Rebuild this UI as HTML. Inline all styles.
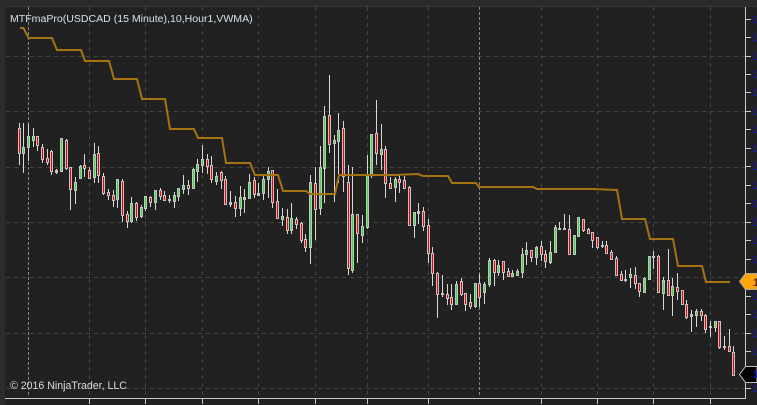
<!DOCTYPE html>
<html><head><meta charset="utf-8"><style>
html,body{margin:0;padding:0;background:#212121;width:757px;height:405px;overflow:hidden}
svg{display:block}
text{font-family:"Liberation Sans",Arial,sans-serif}
</style></head><body>
<svg width="757" height="405" viewBox="0 0 757 405" xmlns="http://www.w3.org/2000/svg">
<rect width="757" height="405" fill="#212121"/>
<rect width="757" height="6" fill="#2b2b2d"/>
<rect y="6" width="757" height="1" fill="#39393b"/>
<rect width="5" height="405" fill="#2c2c2e"/>
<g fill="none" stroke="#444" stroke-width="1" stroke-dasharray="4 4">
<path d="M6 56.5H745M6 111.5H745M6 167.5H745M6 222.5H745M6 277.5H745M6 333.5H745M6 388.5H745"/>
<path d="M89.5 7V398M145.5 7V398M202.5 7V398M258.5 7V398M315.5 7V398M367.5 7V398M428.5 7V398M541.5 7V398M597.5 7V398M653.5 7V398M710.5 7V398"/>
</g>
<path d="M28.5 7V396M479.5 7V396" fill="none" stroke="#888" stroke-dasharray="3 2"/>
<!-- wicks -->
<path fill="none" stroke="#d8d8d8" stroke-width="1" d="M19.5 123V165M23.5 123V173M28.5 124V161M33.5 128V147M37.5 136V151M42.5 144V163M47.5 149V165M51.5 150V175M56.5 169V174M61.5 138V172M66.5 139V170M70.5 167V210M75.5 177V204M80.5 165V179M84.5 154V177M89.5 167V178M94.5 143V183M98.5 146V183M103.5 173V195M108.5 189V200M113.5 190V207M117.5 179V208M122.5 179V222M127.5 211V228M131.5 197V223M136.5 202V221M141.5 205V218M145.5 196V211M150.5 196V207M155.5 190V210M160.5 188V200M164.5 191V201M169.5 195V203M174.5 192V208M178.5 188V201M183.5 175V194M188.5 180V195M193.5 168V189M197.5 159V182M202.5 145V173M207.5 154V174M211.5 156V183M216.5 172V185M221.5 171V189M225.5 176V205M230.5 191V207M235.5 196V217M240.5 186V216M244.5 189V213M249.5 174V198M254.5 177V198M258.5 183V196M263.5 175V200M268.5 167V198M272.5 170V208M277.5 189V218M282.5 208V226M287.5 209V234M291.5 203V234M296.5 217V229M301.5 222V243M305.5 234V252M310.5 175V264M315.5 167V240M320.5 146V215M324.5 106V203M329.5 75V153M334.5 135V202M338.5 113V183M343.5 121V192M348.5 165V275M352.5 167V273M357.5 214V263M362.5 215V243M367.5 155V229M371.5 134V178M376.5 100V165M381.5 124V170M385.5 146V198M390.5 177V189M395.5 177V202M399.5 175V193M404.5 176V189M409.5 186V226M414.5 212V238M418.5 203V224M423.5 207V231M428.5 219V263M432.5 247V286M437.5 272V318M442.5 275V297M447.5 284V305M451.5 284V310M456.5 281V305M461.5 278V296M465.5 293V311M470.5 294V309M475.5 283V308M479.5 274V307M484.5 282V304M489.5 258V287M494.5 259V286M498.5 260V276M503.5 261V280M508.5 268V277M512.5 270V277M517.5 269V276M522.5 248V278M526.5 242V265M531.5 250V262M536.5 246V265M541.5 241V261M545.5 250V268M550.5 241V264M555.5 225V252M559.5 222V230M564.5 214V230M569.5 215V255M574.5 235V255M578.5 217V237M583.5 219V232M588.5 228V234M592.5 232V248M597.5 237V249M602.5 241V248M606.5 241V254M611.5 250V260M616.5 256V275M621.5 271V281M625.5 270V282M630.5 268V288M635.5 267V289M639.5 283V297M644.5 277V293M649.5 256V279M653.5 251V269M658.5 255V293M663.5 277V310M668.5 249V295M672.5 278V316M677.5 273V300M682.5 290V305M686.5 300V319M691.5 310V332M696.5 309V327M701.5 309V321M705.5 314V333M710.5 321V337M715.5 321V332M719.5 321V349M724.5 336V350M729.5 329V352M733.5 346V375"/>
<!-- bodies -->
<path fill="none" stroke="#c4c4c4" stroke-width="3" d="M19.5 128V154M23.5 147V154M28.5 136V148M33.5 136V141M37.5 136V146M42.5 147V160M47.5 158V163M51.5 151V172M56.5 170V173M61.5 138V172M66.5 140V169M70.5 167V190M75.5 182V191M80.5 166V179M84.5 165V169M89.5 170V179M94.5 154V178M98.5 153V176M103.5 176V194M108.5 192V196M113.5 195V201M117.5 179V200M122.5 181V216M127.5 214V222M131.5 203V222M136.5 203V218M141.5 207V217M145.5 196V209M150.5 197V203M155.5 190V203M160.5 190V197M164.5 195V201M169.5 199V201M174.5 195V202M178.5 188V197M183.5 185V190M188.5 185V189M193.5 169V189M197.5 164V172M202.5 159V166M207.5 159V167M211.5 165V180M216.5 176V182M221.5 172V181M225.5 179V205M230.5 202V205M235.5 202V209M240.5 197V209M244.5 197V200M249.5 182V199M254.5 180V195M258.5 193V196M263.5 179V194M268.5 171V180M272.5 170V203M277.5 201V219M282.5 216V220M287.5 217V231M291.5 218V231M296.5 219V225M301.5 223V241M305.5 239V248M310.5 182V248M315.5 183V210M320.5 167V209M324.5 116V169M329.5 115V145M334.5 140V144M338.5 130V142M343.5 128V177M348.5 182V269M352.5 214V271M357.5 214V234M362.5 226V236M367.5 175V228M371.5 134V176M376.5 133V154M381.5 149V155M385.5 149V184M390.5 183V189M395.5 179V188M399.5 179V183M404.5 180V189M409.5 187V226M414.5 212V226M418.5 211V214M423.5 211V227M428.5 225V254M432.5 253V274M437.5 273V295M442.5 293V295M447.5 294V299M451.5 297V305M456.5 284V305M461.5 281V295M465.5 293V305M470.5 302V307M475.5 283V307M479.5 283V298M484.5 284V293M489.5 260V285M494.5 260V273M498.5 265V273M503.5 261V273M508.5 271V277M512.5 273V277M517.5 271V276M522.5 254V273M526.5 250V255M531.5 250V258M536.5 247V258M541.5 246V255M545.5 254V262M550.5 252V263M555.5 227V253M559.5 228V230M564.5 228V230M569.5 229V255M574.5 235V255M578.5 217V237M583.5 219V231M588.5 229V234M592.5 232V241M597.5 237V248M602.5 245V247M606.5 245V254M611.5 252V260M616.5 258V276M621.5 274V281M625.5 279V281M630.5 274V278M635.5 275V284M639.5 283V292M644.5 278V293M649.5 256V280M653.5 256V258M658.5 256V293M663.5 280V294M668.5 280V296M672.5 286V296M677.5 287V292M682.5 290V305M686.5 304V318M691.5 314V317M696.5 311V316M701.5 311V316M705.5 315V330M710.5 326V328M715.5 321V328M719.5 321V348M724.5 346V348M729.5 346V352M733.5 352V376"/>
<!-- red -->
<path fill="none" stroke="#f00000" stroke-width="1" d="M19.5 129V153M37.5 137V145M42.5 148V159M47.5 159V162M51.5 152V171M66.5 141V168M70.5 168V189M84.5 166V168M89.5 171V178M98.5 154V175M103.5 177V193M108.5 193V195M113.5 196V200M122.5 182V215M127.5 215V221M136.5 204V217M150.5 198V202M160.5 191V196M164.5 196V200M188.5 186V188M207.5 160V166M211.5 166V179M221.5 173V180M225.5 180V204M235.5 203V208M254.5 181V194M272.5 171V202M277.5 202V218M287.5 218V230M296.5 220V224M301.5 224V240M305.5 240V247M315.5 184V209M329.5 116V144M343.5 129V176M348.5 183V268M357.5 215V233M376.5 134V153M385.5 150V183M390.5 184V188M399.5 180V182M404.5 181V188M409.5 188V225M423.5 212V226M428.5 226V253M432.5 254V273M437.5 274V294M447.5 295V298M451.5 298V304M461.5 282V294M465.5 294V304M470.5 303V306M479.5 284V297M494.5 261V272M503.5 262V272M508.5 272V276M531.5 251V257M541.5 247V254M545.5 255V261M569.5 230V254M583.5 220V230M588.5 230V233M592.5 233V240M597.5 238V247M606.5 246V253M611.5 253V259M616.5 259V275M621.5 275V280M635.5 276V283M639.5 284V291M658.5 257V292M668.5 281V295M677.5 288V291M682.5 291V304M686.5 305V317M701.5 312V315M705.5 316V329M719.5 322V347M729.5 347V351M733.5 353V375"/>
<!-- green -->
<path fill="none" stroke="#35e035" stroke-width="1" d="M23.5 148V153M28.5 137V147M33.5 137V140M61.5 139V171M75.5 183V190M80.5 167V178M94.5 155V177M117.5 180V199M131.5 204V221M141.5 208V216M145.5 197V208M155.5 191V202M174.5 196V201M178.5 189V196M183.5 186V189M193.5 170V188M197.5 165V171M202.5 160V165M216.5 177V181M240.5 198V208M249.5 183V198M263.5 180V193M268.5 172V179M282.5 217V219M291.5 219V230M310.5 183V247M320.5 168V208M324.5 117V168M334.5 141V143M338.5 131V141M352.5 215V270M362.5 227V235M367.5 176V227M371.5 135V175M381.5 150V154M395.5 180V187M414.5 213V225M456.5 285V304M475.5 284V306M484.5 285V292M489.5 261V284M498.5 266V272M512.5 274V276M517.5 272V275M522.5 255V272M526.5 251V254M536.5 248V257M550.5 253V262M555.5 228V252M574.5 236V254M578.5 218V236M630.5 275V277M644.5 279V292M649.5 257V279M663.5 281V293M672.5 287V295M696.5 312V315M715.5 322V327"/>
<!-- indicator -->
<path fill="none" stroke="#a5730f" stroke-width="2" d="M20 28H23.5L28.5 38H52L57 50H81L85 61H109L114 79H137L142 99H165L170 129H194L198 138H222L226 163H250L255 175H278L283 191H306L310 194H335L339 175H375L395 175L418 174L423 176H448L452 183H476L479 187H533L537 189H592L617 190L622 219H645L650 239H673L678 266H702L706 282H730"/>
<!-- axes -->
<path fill="none" stroke="#c8c8c8" stroke-width="1" d="M5 398.5H745.5V7M89.5 398V404M145.5 398V404M202.5 398V404M258.5 398V404M315.5 398V404M367.5 398V404M428.5 398V404M541.5 398V404M597.5 398V404M653.5 398V404M710.5 398V404"/>
<path fill="none" stroke="#c8c8c8" stroke-width="1" d="M746 19.5H751M746 37.5H751M746 56.5H751M746 74.5H751M746 92.5H751M746 111.5H751M746 129.5H751M746 148.5H751M746 166.5H751M746 185.5H751M746 203.5H751M746 222.5H751M746 240.5H751M746 259.5H751M746 296.5H751M746 314.5H751M746 333.5H751M746 351.5H751M746 388.5H751"/>
<g font-size="11" font-weight="bold" fill="#1d1c86">
<text x="752" y="23">1.3</text><text x="752" y="41">1.3</text><text x="752" y="60">1.3</text><text x="752" y="78">1.3</text><text x="752" y="96">1.3</text><text x="752" y="115">1.3</text><text x="752" y="133">1.3</text><text x="752" y="152">1.3</text><text x="752" y="170">1.3</text><text x="752" y="189">1.3</text><text x="752" y="207">1.3</text><text x="752" y="226">1.3</text><text x="752" y="244">1.3</text><text x="752" y="263">1.3</text><text x="752" y="300">1.3</text><text x="752" y="318">1.3</text><text x="752" y="337">1.3</text><text x="752" y="355">1.3</text><text x="752" y="392">1.3</text>
</g>
<polygon points="757,273.5 745.5,273.5 739.5,281.5 745.5,289.5 757,289.5" fill="#ffa50a" stroke="#aaa"/>
<polygon points="757,366.5 745.5,366.5 739.5,374.5 745.5,382.5 757,382.5" fill="#000" stroke="#c0c0c0"/>
<text x="753" y="286" font-size="11" font-weight="bold" fill="#5a2a10">1.3</text>
<text x="753" y="378" font-size="11" font-weight="bold" fill="#2222c0">1.3</text>
<text x="10" y="22" font-size="10.56" fill="#d6e2ea">MTFmaPro(USDCAD (15 Minute),10,Hour1,VWMA)</text>
<text x="10" y="389" font-size="10.6" fill="#d6dcdf">© 2016 NinjaTrader, LLC</text>
</svg>
</body></html>
